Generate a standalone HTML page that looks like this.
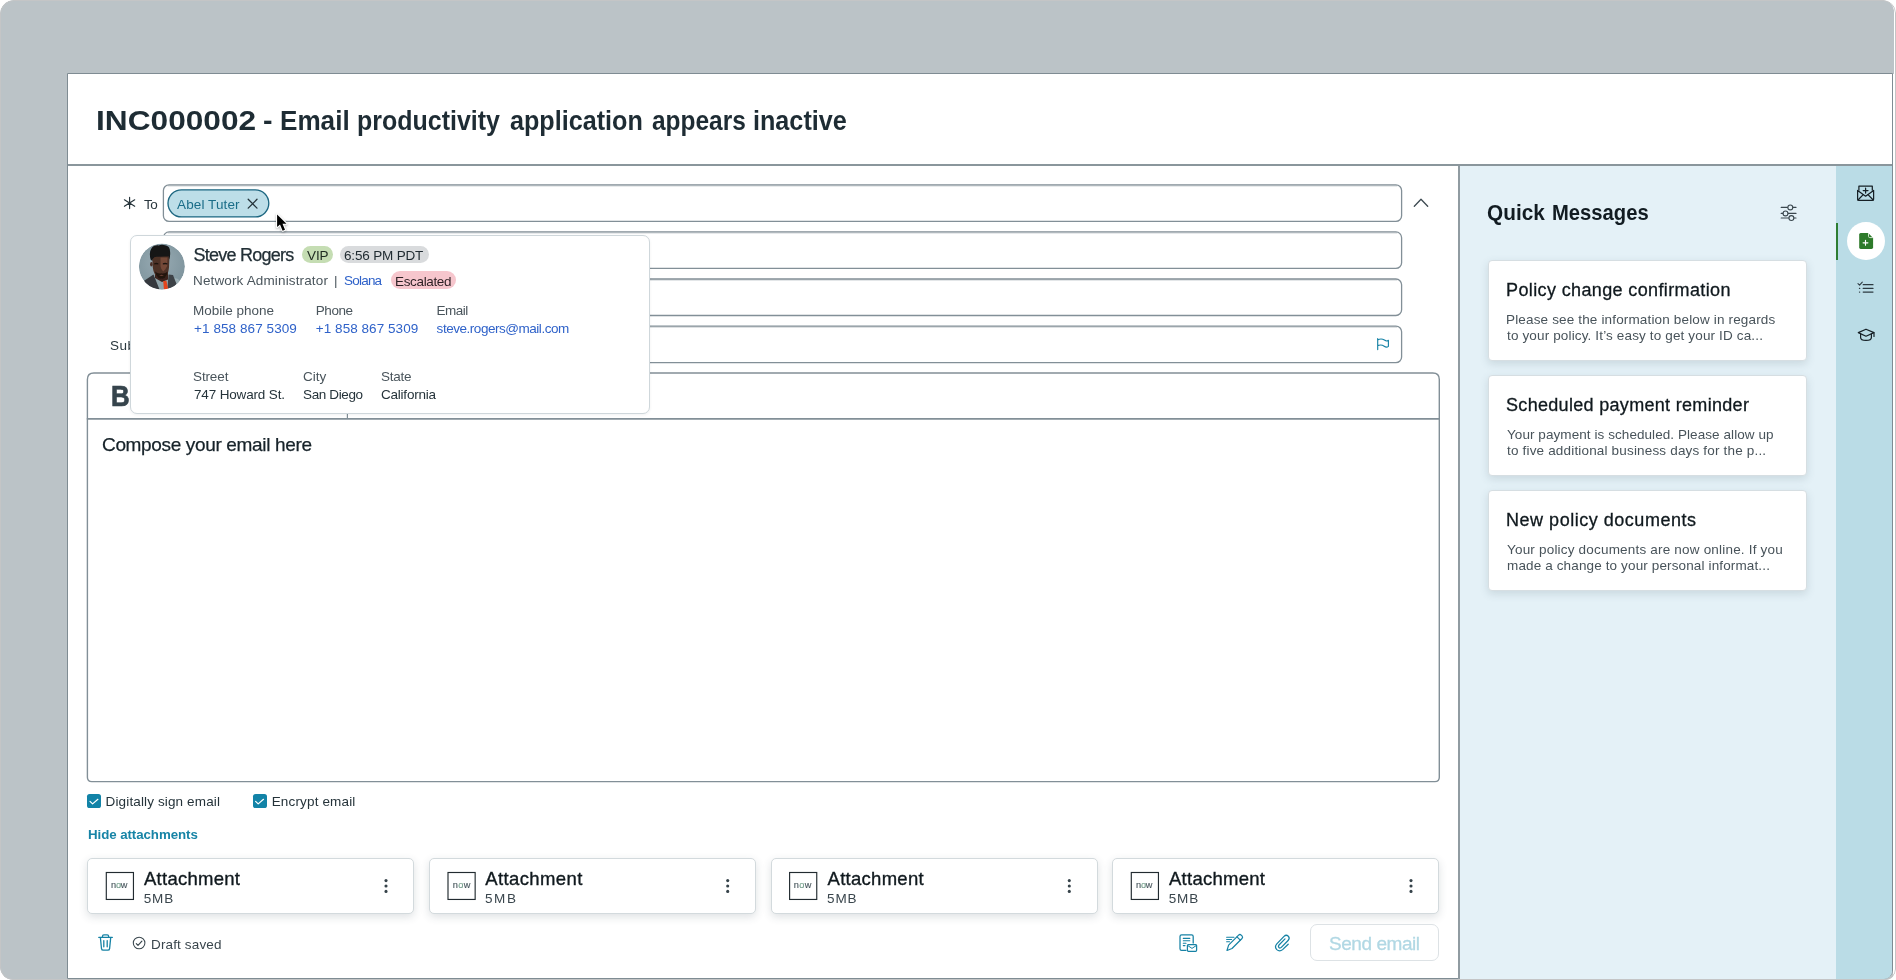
<!DOCTYPE html>
<html lang="en">
<head>
<meta charset="utf-8">
<title>INC000002 - Email productivity application appears inactive</title>
<style>
*{box-sizing:border-box;margin:0;padding:0}
html,body{width:1896px;height:980px;overflow:hidden;background:#fff;font-family:"Liberation Sans",sans-serif}
#stage{will-change:transform;position:absolute;left:0;top:0;width:1896px;height:980px;background:#fff;border-radius:14px 13px 11px 13px;overflow:hidden}
#stagebd{position:absolute;left:0;top:0;width:1896px;height:980px;border:1px solid #c4c5c6;border-radius:14px 13px 11px 13px;pointer-events:none}
#greybg{position:absolute;left:0;top:0;width:1893.8px;height:980px;background:#bbc3c7;border-radius:14px 12px 0 13px}
#panel{position:absolute;left:67px;top:73px;width:1826px;height:906.3px;background:#fff;border:1px solid #7f8c93;border-radius:0 0 9px 0;overflow:hidden}
#titleline{position:absolute;left:68px;top:164px;width:1824px;height:2px;background:#8a969c}
.t{position:absolute;white-space:nowrap;line-height:1;font-family:"Liberation Sans",sans-serif}
#popup{position:absolute;left:130px;top:235px;width:520px;height:178.5px;background:#fff;border:1px solid #cfd7db;border-radius:7px;box-shadow:0 1px 3px rgba(40,60,70,.07)}
.badge{position:absolute;border-radius:9px}
.cb{position:absolute;width:14px;height:14px;border-radius:2.6px;background:#1283a7}
.att{position:absolute;top:858px;width:327px;height:56px;border:1px solid #d3dadd;border-radius:5px;background:#fff;box-shadow:0 3px 8px rgba(50,70,80,.16)}
#sendbtn{position:absolute;left:1310px;top:924px;width:129px;height:37px;border:1.5px solid #dde2e5;border-radius:7px;background:#fff}
#side{position:absolute;left:1458px;top:165.5px;width:378px;height:813.5px;background:#e4f1f7;border-left:2px solid #909ba1}
#rail{position:absolute;left:1835.7px;top:165.5px;width:56.3px;height:813.5px;border-radius:0 0 8px 0;background:#badce6}
.card{position:absolute;left:1488px;width:319px;height:101px;background:#fff;border:1px solid #d6dee2;border-radius:4px;box-shadow:0 3px 9px rgba(60,90,100,.16)}
#railsel{position:absolute;left:1835.5px;top:222.5px;width:2.3px;height:37.5px;background:#2e7d32}
#railcirc{position:absolute;left:1847.3px;top:222px;width:37.8px;height:37.8px;border-radius:50%;background:#fff}
svg{position:absolute;overflow:visible}

</style>
</head>
<body>
<div id="stage">
<div id="greybg"></div>
<div style="position:absolute;left:1893px;top:74px;width:3px;height:906px;background:#fff"></div>
<div id="panel"></div>
<div id="titleline"></div>

<!-- right side -->
<div id="side"></div>
<div id="rail"></div>
<div id="railsel"></div>
<div id="railcirc"></div>
<div class="card" style="top:260px"></div>
<div class="card" style="top:375px"></div>
<div class="card" style="top:490px"></div>

<!-- form -->

<svg style="left:0;top:0" width="1896" height="980" viewBox="0 0 1896 980" fill="none" stroke-linecap="round" stroke-linejoin="round">
<!-- inputs -->
<g stroke="#828f97" stroke-width="1.3" fill="#fff">
<rect x="163.4" y="184.9" width="1238.2" height="36.5" rx="5.7"/>
<rect x="163.4" y="231.95" width="1238.2" height="36.5" rx="5.7"/>
<rect x="163.4" y="279" width="1238.2" height="36.5" rx="5.7"/>
<rect x="163.4" y="326.1" width="1238.2" height="36.5" rx="5.7"/>
</g>
<!-- inner top shade -->
<path d="M168 185.9H1397M168 232.95H1397M168 280H1397M168 327.1H1397" stroke="#828f97" stroke-width="1" opacity=".45"/>
<!-- recipient pill -->
<rect x="168" y="189.8" width="100.8" height="27.1" rx="13.55" fill="#bddee8" stroke="#1d6781" stroke-width="1.35"/>
<!-- editor -->
<path d="M87.4 777.2V379.5Q87.4 373 93.9 373H1432.8Q1439.3 373 1439.3 379.5V777.2Q1439.3 781.6 1434.9 781.6H91.8Q87.4 781.6 87.4 777.2Z" fill="#fff" stroke="#828f97" stroke-width="1.4"/>
<path d="M87.4 418.9H1439.3" stroke="#828f97" stroke-width="1.6"/>
<path d="M347.4 404V418.5" stroke="#828f97" stroke-width="1.2"/>
<!-- required asterisk -->
<g stroke="#26343b" stroke-width="1.15">
<path d="M129.6 197.3V208.6M124.4 199.8L134.7 206.3M134.7 199.8L124.4 206.3"/>
</g>
<!-- pill close x -->
<path d="M248.2 199.3l8.8 8.8M257 199.3l-8.8 8.8" stroke="#24333a" stroke-width="1.3"/>
<!-- chevron up -->
<path d="M1414.3 206.2L1421 199.2L1427.7 206.2" stroke="#3d4a51" stroke-width="1.3"/>
<!-- flag -->
<path d="M1377.7 338.6V349.6M1377.7 339.9C1380 338.7 1382.6 338.9 1384.4 340.1C1386 341.2 1387.4 341.2 1388.4 340.3V346.3C1387.2 347.4 1385.8 347.4 1384.2 346.2C1382.4 344.9 1380 344.6 1377.7 345.6" stroke="#1682a5" stroke-width="1.15"/>

</svg>
<span class="t" style="left:110.6px;top:381.4px;font-size:30px;font-weight:700;color:#36444c;-webkit-text-stroke:0.7px #36444c;transform:scaleX(.86);transform-origin:left">B</span>
<span class="t" id="lto" style="left:143.90px;top:197.8px;font-size:13.5px;color:#2a373e;letter-spacing:-0.300px;">To</span>
<span class="t" id="lcc" style="left:142.00px;top:244.9px;font-size:13.5px;color:#2a373e;letter-spacing:-1.300px;">Cc</span>
<span class="t" id="lbcc" style="left:134.00px;top:291.9px;font-size:13.5px;color:#2a373e;letter-spacing:1.000px;">Bcc</span>
<span class="t" id="lsub" style="left:110.10px;top:339.0px;font-size:13.5px;color:#2a373e;letter-spacing:0.426px;">Subject</span>
<span class="t" id="pill" style="left:177.10px;top:197.8px;font-size:13.5px;color:#1a6d88;letter-spacing:0.100px;">Abel Tuter</span>

<div id="popup"></div>
<div class="badge" style="left:302.4px;top:246.2px;width:31px;height:17.2px;background:#c5ddb3"></div>
<div class="badge" style="left:339.6px;top:246.2px;width:89.6px;height:17.2px;background:#d9dbdd"></div>
<div class="badge" style="left:391.4px;top:271.2px;width:64.6px;height:17.4px;background:#f6c6cd"></div>

<div class="cb" style="left:87px;top:794px"></div>
<div class="cb" style="left:252.6px;top:794px"></div>

<div class="att" style="left:87px"></div>
<div class="att" style="left:429px"></div>
<div class="att" style="left:771px"></div>
<div class="att" style="left:1112px"></div>

<div id="sendbtn"></div>

<span class="t" id="tt0" style="left:95.80px;top:107.5px;font-size:26.8px;color:#1e2c34;font-weight:700;transform:scaleX(1.1816);transform-origin:0 0;">INC000002</span>
<span class="t" id="tt1" style="left:262.90px;top:107.5px;font-size:26.8px;color:#1e2c34;font-weight:700;transform:scaleX(1.0673);transform-origin:0 0;">-</span>
<span class="t" id="tt2" style="left:280.20px;top:107.5px;font-size:26.8px;color:#1e2c34;font-weight:700;transform:scaleX(0.9742);transform-origin:0 0;">Email</span>
<span class="t" id="tt3" style="left:357.40px;top:107.5px;font-size:26.8px;color:#1e2c34;font-weight:700;transform:scaleX(0.9320);transform-origin:0 0;">productivity</span>
<span class="t" id="tt4" style="left:510.10px;top:107.5px;font-size:26.8px;color:#1e2c34;font-weight:700;transform:scaleX(0.9390);transform-origin:0 0;">application</span>
<span class="t" id="tt5" style="left:652.20px;top:107.5px;font-size:26.8px;color:#1e2c34;font-weight:700;transform:scaleX(0.9127);transform-origin:0 0;">appears</span>
<span class="t" id="tt6" style="left:753.00px;top:107.5px;font-size:26.8px;color:#1e2c34;font-weight:700;transform:scaleX(0.9395);transform-origin:0 0;">inactive</span>
<span class="t" id="pname" style="left:193.40px;top:246.2px;font-size:18px;color:#222f36;letter-spacing:-0.741px;-webkit-text-stroke:0.25px #222f36;">Steve Rogers</span>
<span class="t" id="pvip" style="left:307.00px;top:249.0px;font-size:13.5px;color:#1f2b21;letter-spacing:-0.093px;">VIP</span>
<span class="t" id="ptime" style="left:344.00px;top:249.0px;font-size:13.5px;color:#1f2a30;letter-spacing:-0.172px;">6:56 PM PDT</span>
<span class="t" id="prole" style="left:193.00px;top:274.3px;font-size:13.5px;color:#4a555c;letter-spacing:0.143px;">Network Administrator</span>
<span class="t" id="pbar" style="left:334.00px;top:274.3px;font-size:13.5px;color:#4a555c;">|</span>
<span class="t" id="psol" style="left:344.00px;top:274.3px;font-size:13.5px;color:#2f62c9;letter-spacing:-0.785px;">Solana</span>
<span class="t" id="pesc" style="left:395.00px;top:274.5px;font-size:13.5px;color:#2b1f23;letter-spacing:-0.343px;">Escalated</span>
<span class="t" id="pl1" style="left:193.00px;top:304.0px;font-size:13.5px;color:#4a555c;letter-spacing:-0.011px;">Mobile phone</span>
<span class="t" id="pv1" style="left:194.00px;top:321.7px;font-size:13.5px;color:#2f62c9;letter-spacing:0.081px;">+1 858 867 5309</span>
<span class="t" id="pl2" style="left:315.80px;top:304.0px;font-size:13.5px;color:#4a555c;letter-spacing:-0.439px;">Phone</span>
<span class="t" id="pv2" style="left:315.80px;top:321.7px;font-size:13.5px;color:#2f62c9;letter-spacing:0.048px;">+1 858 867 5309</span>
<span class="t" id="pl3" style="left:436.60px;top:304.0px;font-size:13.5px;color:#4a555c;letter-spacing:-0.551px;">Email</span>
<span class="t" id="pv3" style="left:436.60px;top:321.7px;font-size:13.5px;color:#2f62c9;letter-spacing:-0.467px;">steve.rogers@mail.com</span>
<span class="t" id="pl4" style="left:193.00px;top:370.2px;font-size:13.5px;color:#4a555c;letter-spacing:-0.127px;">Street</span>
<span class="t" id="pv4" style="left:194.00px;top:387.8px;font-size:13.5px;color:#25333a;letter-spacing:-0.159px;">747 Howard St.</span>
<span class="t" id="pl5" style="left:303.00px;top:370.2px;font-size:13.5px;color:#4a555c;letter-spacing:0.040px;">City</span>
<span class="t" id="pv5" style="left:303.00px;top:387.8px;font-size:13.5px;color:#25333a;letter-spacing:-0.368px;">San Diego</span>
<span class="t" id="pl6" style="left:381.00px;top:370.2px;font-size:13.5px;color:#4a555c;letter-spacing:-0.264px;">State</span>
<span class="t" id="pv6" style="left:381.00px;top:387.8px;font-size:13.5px;color:#25333a;letter-spacing:-0.222px;">California</span>
<span class="t" id="compose" style="left:102.00px;top:434.6px;font-size:19px;color:#162229;letter-spacing:-0.344px;-webkit-text-stroke:0.25px #162229;">Compose your email here</span>
<span class="t" id="c1" style="left:105.60px;top:794.7px;font-size:13.5px;color:#25333a;letter-spacing:0.133px;">Digitally sign email</span>
<span class="t" id="c2" style="left:271.70px;top:794.7px;font-size:13.5px;color:#25333a;letter-spacing:0.154px;">Encrypt email</span>
<span class="t" id="hide" style="left:88.00px;top:828.0px;font-size:13.3px;color:#1784a6;font-weight:700;letter-spacing:-0.069px;">Hide attachments</span>
<span class="t" id="an0" style="left:144.00px;top:869.9px;font-size:18.5px;color:#10191e;letter-spacing:0.271px;-webkit-text-stroke:0.35px #10191e;">Attachment</span>
<span class="t" id="nw0" style="left:111.10px;top:881.1px;font-size:9.2px;color:#4a585f;letter-spacing:-0.343px;-webkit-text-stroke:0.15px #4a585f;">n<span style="color:#86c09f">o</span>w</span>
<span class="t" id="as0" style="left:143.80px;top:891.5px;font-size:13.5px;color:#3a464d;letter-spacing:0.800px;">5MB</span>
<span class="t" id="an1" style="left:485.20px;top:869.9px;font-size:18.5px;color:#10191e;letter-spacing:0.401px;-webkit-text-stroke:0.35px #10191e;">Attachment</span>
<span class="t" id="nw1" style="left:452.80px;top:881.1px;font-size:9.2px;color:#4a585f;letter-spacing:0.407px;-webkit-text-stroke:0.15px #4a585f;">n<span style="color:#86c09f">o</span>w</span>
<span class="t" id="as1" style="left:485.00px;top:891.5px;font-size:13.5px;color:#3a464d;letter-spacing:1.575px;">5MB</span>
<span class="t" id="an2" style="left:827.60px;top:869.9px;font-size:18.5px;color:#10191e;letter-spacing:0.271px;-webkit-text-stroke:0.35px #10191e;">Attachment</span>
<span class="t" id="nw2" style="left:793.80px;top:881.1px;font-size:9.2px;color:#4a585f;letter-spacing:0.407px;-webkit-text-stroke:0.15px #4a585f;">n<span style="color:#86c09f">o</span>w</span>
<span class="t" id="as2" style="left:827.10px;top:891.5px;font-size:13.5px;color:#3a464d;letter-spacing:0.800px;">5MB</span>
<span class="t" id="an3" style="left:1169.00px;top:869.9px;font-size:18.5px;color:#10191e;letter-spacing:0.271px;-webkit-text-stroke:0.35px #10191e;">Attachment</span>
<span class="t" id="nw3" style="left:1136.10px;top:881.1px;font-size:9.2px;color:#4a585f;letter-spacing:-0.343px;-webkit-text-stroke:0.15px #4a585f;">n<span style="color:#86c09f">o</span>w</span>
<span class="t" id="as3" style="left:1168.80px;top:891.5px;font-size:13.5px;color:#3a464d;letter-spacing:0.800px;">5MB</span>
<span class="t" id="draft" style="left:151.00px;top:937.6px;font-size:13.5px;color:#3a464d;letter-spacing:0.143px;">Draft saved</span>
<span class="t" id="send" style="left:1329.00px;top:934.0px;font-size:19px;color:#b1d8e4;letter-spacing:-0.442px;-webkit-text-stroke:0.3px #b1d8e4;">Send email</span>
<span class="t" id="qm0" style="left:1487.20px;top:201.8px;font-size:22.5px;color:#121c22;font-weight:700;transform:scaleX(0.9242);transform-origin:0 0;">Quick</span>
<span class="t" id="qm1" style="left:1551.80px;top:201.8px;font-size:22.5px;color:#121c22;font-weight:700;transform:scaleX(0.8985);transform-origin:0 0;">Messages</span>
<span class="t" id="ct0" style="left:1506.00px;top:281.2px;font-size:18px;color:#10191e;letter-spacing:0.375px;-webkit-text-stroke:0.3px #10191e;">Policy change confirmation</span>
<span class="t" id="ca0" style="left:1506.00px;top:312.7px;font-size:13.5px;color:#48535a;letter-spacing:0.157px;">Please see the information below in regards</span>
<span class="t" id="cb0" style="left:1507.00px;top:328.7px;font-size:13.5px;color:#48535a;letter-spacing:0.145px;">to your policy. It’s easy to get your ID ca...</span>
<span class="t" id="ct1" style="left:1506.00px;top:396.2px;font-size:18px;color:#10191e;letter-spacing:0.312px;-webkit-text-stroke:0.3px #10191e;">Scheduled payment reminder</span>
<span class="t" id="ca1" style="left:1507.00px;top:427.7px;font-size:13.5px;color:#48535a;letter-spacing:0.069px;">Your payment is scheduled. Please allow up</span>
<span class="t" id="cb1" style="left:1507.00px;top:443.7px;font-size:13.5px;color:#48535a;letter-spacing:0.174px;">to five additional business days for the p...</span>
<span class="t" id="ct2" style="left:1506.00px;top:511.2px;font-size:18px;color:#10191e;letter-spacing:0.523px;-webkit-text-stroke:0.3px #10191e;">New policy documents</span>
<span class="t" id="ca2" style="left:1507.00px;top:542.7px;font-size:13.5px;color:#48535a;letter-spacing:0.193px;">Your policy documents are now online. If you</span>
<span class="t" id="cb2" style="left:1507.00px;top:558.7px;font-size:13.5px;color:#48535a;letter-spacing:0.134px;">made a change to your personal informat...</span>

<svg id="icons" style="left:0;top:0" width="1896" height="980" viewBox="0 0 1896 980" fill="none" stroke-linecap="round" stroke-linejoin="round">
<!-- avatar -->
<defs>
<clipPath id="avc"><circle cx="161.9" cy="266.5" r="23"/></clipPath>
<filter id="avb" x="-20%" y="-20%" width="140%" height="140%"><feGaussianBlur stdDeviation="0.7"/></filter>
<radialGradient id="avbg" cx="0.45" cy="0.4" r="0.7"><stop offset="0" stop-color="#98abb3"/><stop offset="1" stop-color="#7b919a"/></radialGradient>
</defs>
<g clip-path="url(#avc)" stroke="none">
<circle cx="161.9" cy="266.5" r="23" fill="url(#avbg)"/>
<g filter="url(#avb)">
<!-- right sleeve (light shirt) -->
<path d="M168 276L178 279L186 288V292H168Z" fill="#9db0b6"/>
<!-- left jacket shoulder -->
<path d="M136 292L143 281.5L153.5 274.5L160 284L163 292Z" fill="#35393d"/>
<!-- shirt front -->
<path d="M153.5 274.5L158 279L166 279L169 275L171.5 292H160.5Z" fill="#8ea2a8"/>
<!-- vest right -->
<path d="M168.5 274.5L173 275L176.5 284L171 292H167.2Z" fill="#3d4246"/>
<!-- neck -->
<path d="M155 270H168V279.5L162 282L155 278Z" fill="#3b241d"/>
<!-- tie -->
<path d="M163.2 281L166.4 280.8L168.3 289.5L165.6 291L164 289.8Z" fill="#e4441a"/>
<!-- face -->
<path d="M152.2 257.5Q152 255.5 156 255.5H166Q169.6 255.5 169.4 258.5L169 267.5Q168.4 274.5 164.6 277.8Q161.4 279.6 158.4 277.8Q153.6 274.6 152.8 267.5Z" fill="#4e3127"/>
<!-- face highlight -->
<path d="M160.5 257.5H167.5L167.2 266Q165.5 270 163.2 271.4Q161 270 160.5 266Z" fill="#7b4e3c" opacity=".85"/>
<!-- ear -->
<ellipse cx="151.4" cy="264.3" rx="1.3" ry="2.2" fill="#4a2e25"/>
<!-- eyes / brows -->
<path d="M154.2 263.2Q156.3 262.2 158.4 263.3L158.3 264.6Q156.3 264 154.3 264.5ZM162.8 263.3Q165 262.2 167.4 263.2L167.3 264.5Q165 264 162.9 264.6Z" fill="#1d1210"/>
<!-- beard / mouth -->
<path d="M155 271.5Q158 274 161.5 273.2Q165 274 167.6 271.4Q167.4 275.6 164.6 277.9Q161.4 279.8 158.4 277.9Q155.6 275.8 155 271.5Z" fill="#23140f"/>
<path d="M159.2 275.2Q161.5 274.4 163.8 275.2Q161.5 276.6 159.2 275.2Z" fill="#6b3f33"/>
<!-- hair -->
<path d="M150.6 259.6Q148.8 252 151.4 248.4Q153.6 245 158.6 245.4Q162.2 244 166 245.6Q169.8 246.6 170 251Q170.6 255.6 169.2 259.6L168.6 256.6Q163 256.2 156.4 256.8Q152.6 257 152.2 261Z" fill="#121416"/>
</g>
</g>
<!-- attachment thumbnails -->
<g stroke="#222b30" stroke-width="1.15" fill="none" stroke-linejoin="miter">
<rect x="106.30" y="872.5" width="27.15" height="26.95"/>
<rect x="448.00" y="872.5" width="27.15" height="26.95"/>
<rect x="789.60" y="872.5" width="27.15" height="26.95"/>
<rect x="1131.30" y="872.5" width="27.15" height="26.95"/>
</g>
<!-- mouse cursor -->
<path d="M277.1 214.4V227L280 224.4L282.6 230.7L285 229.7L282.5 223.7H286.5Z" fill="#fff" stroke="#fff" stroke-width="2.2" stroke-linejoin="round" style="filter:drop-shadow(0 1px 1px rgba(0,0,0,.3))"/><path d="M277.1 214.4V227L280 224.4L282.6 230.7L285 229.7L282.5 223.7H286.5Z" fill="#000" stroke="none"/>
<!-- checkbox checks -->
<path d="M90 801.3L92.6 803.9L97.9 799.3" stroke="#fff" stroke-width="1.2"/>
<path d="M255.6 801.3L258.2 803.9L263.5 799.3" stroke="#fff" stroke-width="1.2"/>
<!-- kebabs -->
<g fill="#36434a" stroke="none">
<circle cx="386" cy="880.6" r="1.55"/><circle cx="386" cy="886" r="1.55"/><circle cx="386" cy="891.4" r="1.55"/>
<circle cx="727.7" cy="880.6" r="1.55"/><circle cx="727.7" cy="886" r="1.55"/><circle cx="727.7" cy="891.4" r="1.55"/>
<circle cx="1069.3" cy="880.6" r="1.55"/><circle cx="1069.3" cy="886" r="1.55"/><circle cx="1069.3" cy="891.4" r="1.55"/>
<circle cx="1411" cy="880.6" r="1.55"/><circle cx="1411" cy="886" r="1.55"/><circle cx="1411" cy="891.4" r="1.55"/>
</g>
<!-- trash -->
<g stroke="#1682a5" stroke-width="1.3">
<path d="M98.8 937.4H112.3M102.5 937.2V936.2Q102.5 934.9 103.9 934.9H107.2Q108.6 934.9 108.6 936.2V937.2M100.4 937.6L101.5 948.6Q101.7 950.2 103.3 950.2H107.8Q109.4 950.2 109.6 948.6L110.7 937.6M103.8 940.6V946.8M107.2 940.6V946.8"/>
</g>
<!-- draft saved check circle -->
<g stroke="#3b484f" stroke-width="1.05">
<circle cx="139.1" cy="943" r="5.8"/>
<path d="M136.3 943.6L138 945.4L141.9 941.2" stroke-width="1.2"/>
</g>
<!-- bottom icon A : template doc + envelope -->
<g stroke="#1682a5" stroke-width="1.25">
<path d="M1186 950.3H1181.6Q1180 950.3 1180 948.7V936.4Q1180 934.8 1181.6 934.8H1191.6Q1193.2 934.8 1193.2 936.4V943"/>
<path d="M1183.3 938.4H1189.8M1183.3 940.8H1189.8M1183.3 943.3H1186M1183.3 945.6H1185" stroke-width="1.1"/>
<rect x="1187.4" y="944.6" width="9.2" height="6.7" rx="1" fill="#fff"/>
<path d="M1187.8 945.6L1192 948.4L1196.2 945.6" stroke-width="1"/>
</g>
<!-- bottom icon B : pencil with lines -->
<g stroke="#1682a5" stroke-width="1.2">
<path d="M1226.6 937.3H1234M1226.6 939.5H1231.6M1226.6 941.7H1229.6" stroke-width="1.05"/>
<path d="M1227 950.5L1228.6 945.1L1238.6 935.1Q1239.9 933.9 1241.2 935.1L1242 935.9Q1243.2 937.2 1242 938.5L1232 948.5Z"/>
<path d="M1237 936.8L1240.3 940.1"/>
</g>
<!-- bottom icon C : paperclip -->
<g stroke="#1682a5" stroke-width="1.25">
<path d="M1288.2 944.2L1282.6 949.6Q1279.6 952.2 1276.8 949.6Q1274.2 946.8 1276.8 943.9L1284 936.4Q1286.2 934.2 1288.3 936.2Q1290.2 938.3 1288.1 940.5L1281.3 947.4Q1280 948.6 1278.9 947.5Q1277.8 946.3 1279 945L1285 938.9"/>
</g>
<!-- quick messages settings sliders -->
<g stroke="#3b484f" stroke-width="1.15">
<path d="M1781.2 207.4H1787.4M1793.2 207.4H1796M1781.2 213.4H1782.7M1788.4 213.4H1796M1781.2 218H1788.5M1794.3 218H1796"/>
<circle cx="1790.3" cy="207.4" r="2.45"/><circle cx="1785.5" cy="213.4" r="2.45"/><circle cx="1791.4" cy="218" r="2.45"/>
</g>
<!-- rail icon 1 : envelope plus -->
<g stroke="#162026" stroke-width="1.25">
<path d="M1858.9 190.2V186.2H1872.3V190.2"/>
<path d="M1857.6 190.4L1865.6 196.2L1873.6 190.4V199.2Q1873.6 200.4 1872.4 200.4H1858.8Q1857.6 200.4 1857.6 199.2Z"/>
<path d="M1858 200L1863.2 194.6M1873.2 200L1868 194.6"/>
<path d="M1865.6 188.2V193M1863.2 190.6H1868"/>
</g>
<!-- rail icon 2 : document plus (green) -->
<path d="M1860.6 233H1868.2L1873.1 237.9V247.3Q1873.1 248.9 1871.5 248.9H1860.6Q1859.2 248.9 1859.2 247.3V234.6Q1859.2 233 1860.6 233Z" fill="#2d7a2a" stroke="none"/>
<path d="M1868.5 233.4V236.3Q1868.5 237.6 1869.8 237.6H1872.8" stroke="#cfe3cc" stroke-width="1"/>
<path d="M1865.5 240.4V245.2M1863.1 242.8H1867.9" stroke="#fff" stroke-width="1.15"/>
<!-- rail icon 3 : checklist -->
<g stroke="#2d3a41" stroke-width="1.2">
<path d="M1863.2 284.7H1873M1863.2 288.4H1873M1863.2 292.1H1873"/>
<path d="M1858 283.6L1859.6 285.1L1862.3 282.2" stroke-width="1.1"/>
<path d="M1859.5 288.4H1859.7M1859.5 292.1H1859.7" stroke-width="1.3"/>
</g>
<!-- rail icon 4 : graduation cap -->
<g stroke="#162026" stroke-width="1.2">
<path d="M1858.3 332.6L1866 329.2L1874 332.6L1866 336.2Z"/>
<path d="M1860.6 333.9V337.4Q1860.6 340.3 1866 340.3Q1871.4 340.3 1871.4 337.4V333.9"/>
<path d="M1874 332.8V336.4"/>
</g>

</svg>
<div id="stagebd"></div>
</div>

</body>
</html>
